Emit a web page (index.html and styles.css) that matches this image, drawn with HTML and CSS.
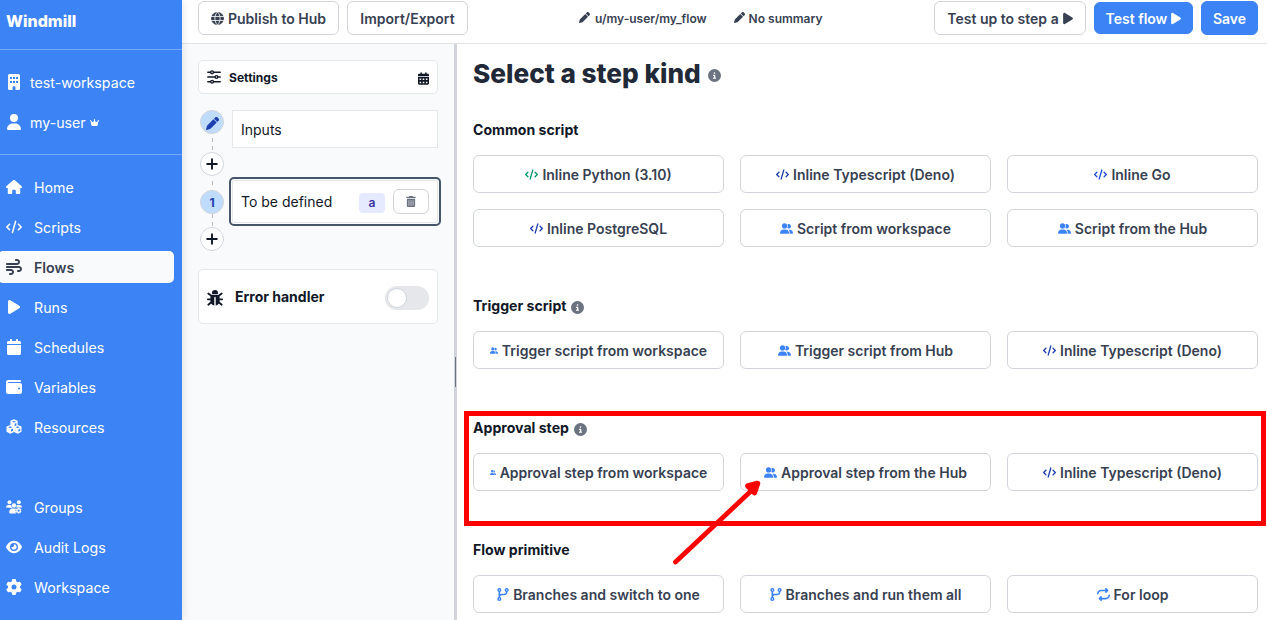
FILE: index.html
```
<!DOCTYPE html>
<html lang="en">
<head>
<meta charset="utf-8">
<title>Windmill</title>
<link rel="stylesheet" href="styles.css">
</head>
<body>
<svg class="sprite" aria-hidden="true">
  <symbol id="code" viewBox="0 0 640 512"><path d="M392.8 1.2c-17-4.9-34.7 5-39.6 22l-128 448c-4.9 17 5 34.7 22 39.6s34.7-5 39.6-22l128-448c4.9-17-5-34.7-22-39.6zm80.6 120.1c-12.5 12.5-12.5 32.8 0 45.3L562.7 256l-89.4 89.4c-12.5 12.5-12.5 32.8 0 45.3s32.8 12.5 45.3 0l112-112c12.5-12.5 12.5-32.8 0-45.3l-112-112c-12.5-12.5-32.8-12.5-45.3 0zm-306.7 0c-12.5-12.5-32.8-12.5-45.3 0l-112 112c-12.5 12.5-12.5 32.8 0 45.3l112 112c12.5 12.5 32.8 12.5 45.3 0s12.5-32.8 0-45.3L77.3 256l89.4-89.4c12.5-12.5 12.5-32.8 0-45.3z"/></symbol>
  <symbol id="play" viewBox="0 0 384 512"><path d="M73 39c-14.8-9.1-33.4-9.4-48.5-.9S0 62.6 0 80V432c0 17.4 9.4 33.4 24.5 41.9s33.7 8.1 48.5-.9L361 297c14.3-8.7 23-24.2 23-41s-8.7-32.2-23-41L73 39z"/></symbol>
  <symbol id="user" viewBox="0 0 448 512"><path d="M224 256A128 128 0 1 0 224 0a128 128 0 1 0 0 256zm-45.7 48C79.8 304 0 383.8 0 482.3C0 498.7 13.3 512 29.7 512H418.3c16.4 0 29.7-13.3 29.7-29.7C448 383.8 368.2 304 269.7 304H178.3z"/></symbol>
  <symbol id="building" viewBox="0 0 384 512"><path fill-rule="evenodd" d="M48 0H336a48 48 0 0 1 48 48V464a48 48 0 0 1-48 48H240V432a48 48 0 0 0-96 0v80H48a48 48 0 0 1-48-48V48A48 48 0 0 1 48 0zM64 96v64h64V96zm96 0v64h64V96zm96 0v64h64V96zM64 224v64h64V224zm96 0v64h64V224zm96 0v64h64V224z"/></symbol>
  <symbol id="house" viewBox="0 0 576 512"><path d="M575.8 255.5c0 18-15 32.1-32 32.1h-32l.7 160.2V472c0 22.1-17.9 40-40 40H392c-22.1 0-40-17.9-40-40V384c0-17.7-14.3-32-32-32H256c-17.7 0-32 14.3-32 32v88c0 22.1-17.9 40-40 40H104c-22.1 0-40-17.9-40-40V287.6H32c-18 0-32-14-32-32.1c0-9 3-17 10-24L266.4 8c7-7 15-8 22-8s15 2 21 7L564.8 231.5c8 7 12 15 11 24z"/></symbol>
  <symbol id="gear" viewBox="0 0 512 512"><path d="M495.9 166.6c3.2 8.7 .5 18.4-6.4 24.6l-43.3 39.4c1.1 8.3 1.7 16.8 1.7 25.4s-.6 17.1-1.7 25.4l43.3 39.4c6.9 6.2 9.6 15.9 6.4 24.6c-4.4 11.9-9.7 23.3-15.8 34.3l-4.7 8.1c-6.6 11-14 21.4-22.1 31.2c-5.9 7.2-15.7 9.6-24.5 6.8l-55.7-17.7c-13.4 10.3-28.2 18.9-44 25.4l-12.5 57.1c-2 9.1-9 16.3-18.2 17.8c-13.8 2.3-28 3.5-42.5 3.5s-28.7-1.2-42.5-3.5c-9.2-1.5-16.2-8.7-18.2-17.8l-12.5-57.1c-15.8-6.5-30.6-15.1-44-25.4L83.1 425.9c-8.8 2.8-18.6 .3-24.5-6.8c-8.1-9.8-15.5-20.2-22.1-31.2l-4.7-8.1c-6.1-11-11.4-22.4-15.8-34.3c-3.2-8.7-.5-18.4 6.4-24.6l43.3-39.4C64.6 273.1 64 264.6 64 256s.6-17.1 1.7-25.4L22.4 191.2c-6.9-6.2-9.6-15.9-6.4-24.6c4.4-11.9 9.7-23.3 15.8-34.3l4.7-8.1c6.6-11 14-21.4 22.1-31.2c5.9-7.2 15.7-9.6 24.5-6.8l55.7 17.7c13.4-10.3 28.2-18.9 44-25.4l12.5-57.1c2-9.1 9-16.3 18.2-17.8C227.3 1.2 241.5 0 256 0s28.7 1.2 42.5 3.5c9.2 1.5 16.2 8.7 18.2 17.8l12.5 57.1c15.8 6.5 30.6 15.1 44 25.4l55.7-17.7c8.8-2.8 18.6-.3 24.5 6.8c8.1 9.8 15.5 20.2 22.1 31.2l4.7 8.1c6.1 11 11.4 22.4 15.8 34.3zM256 336a80 80 0 1 0 0-160 80 80 0 1 0 0 160z"/></symbol>
  <symbol id="eye" viewBox="0 0 576 512"><path d="M288 32c-80.8 0-145.5 36.8-192.6 80.6C48.6 156 17.3 208 2.5 243.7c-3.3 7.9-3.3 16.7 0 24.6C17.3 304 48.6 356 95.4 399.4C142.5 443.2 207.2 480 288 480s145.5-36.8 192.6-80.6c46.8-43.5 78.1-95.4 93-131.1c3.3-7.9 3.3-16.7 0-24.6c-14.9-35.7-46.2-87.7-93-131.1C433.5 68.8 368.8 32 288 32zM144 256a144 144 0 1 1 288 0 144 144 0 1 1 -288 0zm144-64c0 35.3-28.7 64-64 64c-7.1 0-13.9-1.2-20.3-3.3c-5.5-1.8-11.9 1.6-11.7 7.4c.3 6.9 1.3 13.8 3.2 20.7c13.7 51.2 66.4 81.6 117.6 67.9s81.6-66.4 67.9-117.6c-11.1-41.5-47.8-69.4-88.6-71.1c-5.8-.2-9.2 6.1-7.4 11.7c2.1 6.4 3.3 13.2 3.3 20.3z"/></symbol>
  <symbol id="wind" viewBox="0 0 512 512"><path d="M288 32c0 17.7 14.3 32 32 32h32c17.7 0 32 14.3 32 32s-14.3 32-32 32H32c-17.7 0-32 14.3-32 32s14.3 32 32 32H352c53 0 96-43 96-96s-43-96-96-96H320c-17.7 0-32 14.3-32 32zm64 352c0 17.7 14.3 32 32 32h32c53 0 96-43 96-96s-43-96-96-96H32c-17.7 0-32 14.3-32 32s14.3 32 32 32H416c17.7 0 32 14.3 32 32s-14.3 32-32 32H384c-17.7 0-32 14.3-32 32zM128 512h32c53 0 96-43 96-96s-43-96-96-96H32c-17.7 0-32 14.3-32 32s14.3 32 32 32H160c17.7 0 32 14.3 32 32s-14.3 32-32 32H128c-17.7 0-32 14.3-32 32s14.3 32 32 32z"/></symbol>
  <symbol id="info" viewBox="0 0 512 512"><path d="M256 512A256 256 0 1 0 256 0a256 256 0 1 0 0 512zM216 336h24V272H216c-13.3 0-24-10.7-24-24s10.7-24 24-24h48c13.3 0 24 10.7 24 24v88h8c13.3 0 24 10.7 24 24s-10.7 24-24 24H216c-13.3 0-24-10.7-24-24s10.7-24 24-24zm40-208a32 32 0 1 1 0 64 32 32 0 1 1 0-64z"/></symbol>
  <symbol id="crown" viewBox="0 0 576 512"><path d="M309 106c11.4-7 19-19.7 19-34c0-22.1-17.9-40-40-40s-40 17.9-40 40c0 14.4 7.6 27 19 34L209.7 220.6c-9.1 18.2-32.7 23.4-48.6 10.7L72 160c5-6.7 8-15 8-24c0-22.1-17.9-40-40-40S0 113.9 0 136s17.9 40 40 40c.2 0 .5 0 .7 0L86.4 427.4c5.5 30.4 32 52.6 63 52.6H426.6c30.9 0 57.4-22.1 63-52.6L535.3 176c.2 0 .5 0 .7 0c22.1 0 40-17.9 40-40s-17.9-40-40-40s-40 17.9-40 40c0 9 3 17.3 8 24l-89.1 71.3c-15.9 12.7-39.5 7.5-48.6-10.7L309 106z"/></symbol>
  <symbol id="people" viewBox="0 0 640 512"><path d="M96 128a128 128 0 1 1 256 0A128 128 0 1 1 96 128zM0 482.3C0 383.8 79.8 304 178.3 304h91.4C368.2 304 448 383.8 448 482.3c0 16.4-13.3 29.7-29.7 29.7H29.7C13.3 512 0 498.7 0 482.3zM609.3 512H471.4c5.4-9.4 8.6-20.3 8.6-32v-8c0-60.7-27.1-115.2-69.8-151.8c2.4-.1 4.7-.2 7.1-.2h61.4C567.8 320 640 392.2 640 481.3c0 17-13.8 30.7-30.7 30.7zM432 256c-31 0-59-12.6-79.3-32.9C372.4 196.5 384 163.6 384 128c0-26.8-6.6-52.1-18.3-74.3C384.3 40.1 407.2 32 432 32c61.9 0 112 50.1 112 112s-50.1 112-112 112z"/></symbol>
  <symbol id="pen" viewBox="0 0 512 512"><path d="M362.7 19.3L314.3 67.7 444.3 197.7l48.4-48.4c25-25 25-65.5 0-90.5L453.3 19.3c-25-25-65.5-25-90.5 0zm-71 71L58.6 323.5c-10.4 10.4-18 23.3-22.2 37.4L1 481.2C-1.5 489.7 .8 498.8 7 505s15.3 8.5 23.7 6.1l120.3-35.4c14.1-4.2 27-11.8 37.4-22.2L421.7 220.3 291.7 90.3z"/></symbol>
  <symbol id="calendar" viewBox="0 0 448 512"><path d="M96 32V64H48C21.5 64 0 85.5 0 112v48H448V112c0-26.5-21.5-48-48-48H352V32c0-17.7-14.3-32-32-32s-32 14.3-32 32V64H160V32c0-17.7-14.3-32-32-32S96 14.3 96 32zM448 192H0V464c0 26.5 21.5 48 48 48H400c26.5 0 48-21.5 48-48V192z"/></symbol>
  <symbol id="calendar-days" viewBox="0 0 448 512"><path fill-rule="evenodd" d="M96 32V64H48C21.5 64 0 85.5 0 112v48H448V112c0-26.5-21.5-48-48-48H352V32c0-17.7-14.3-32-32-32s-32 14.3-32 32V64H160V32c0-17.7-14.3-32-32-32S96 14.3 96 32zM448 192H0V464c0 26.5 21.5 48 48 48H400c26.5 0 48-21.5 48-48V192zM64 256h64v64H64zM192 256h64v64h-64zM320 256h64v64h-64zM64 384h64v64H64zM192 384h64v64h-64zM320 384h64v64h-64z"/></symbol>
  <symbol id="wallet" viewBox="0 0 512 512"><path d="M64 32C28.7 32 0 60.7 0 96V416c0 35.3 28.7 64 64 64H448c35.3 0 64-28.7 64-64V192c0-35.3-28.7-64-64-64H80c-8.8 0-16-7.2-16-16s7.2-16 16-16H448c17.7 0 32-14.3 32-32s-14.3-32-32-32H64zM416 272a32 32 0 1 1 0 64 32 32 0 1 1 0-64z"/></symbol>
  <symbol id="branch" viewBox="0 0 448 512"><path d="M80 104a24 24 0 1 0 0-48 24 24 0 1 0 0 48zm80-24c0 32.8-19.7 61-48 73.3v87.8c18.8-10.9 40.7-17.1 64-17.1h96c35.3 0 64-28.7 64-64v-6.7C307.7 141 288 112.8 288 80c0-44.2 35.8-80 80-80s80 35.8 80 80c0 32.8-19.7 61-48 73.3V160c0 70.7-57.3 128-128 128H176c-35.3 0-64 28.7-64 64v6.7c28.3 12.3 48 40.5 48 73.3c0 44.2-35.8 80-80 80s-80-35.8-80-80c0-32.8 19.7-61 48-73.3V352 153.3C19.7 141 0 112.8 0 80C0 35.8 35.8 0 80 0s80 35.8 80 80zm232 0a24 24 0 1 0 -48 0 24 24 0 1 0 48 0zM80 456a24 24 0 1 0 0-48 24 24 0 1 0 0 48z"/></symbol>
  <symbol id="repeat" viewBox="0 0 512 512"><path d="M0 224c0 17.7 14.3 32 32 32s32-14.3 32-32c0-53 43-96 96-96H320v32c0 12.9 7.8 24.6 19.8 29.6s25.7 2.2 34.9-6.9l64-64c12.5-12.5 12.5-32.8 0-45.3l-64-64c-9.2-9.2-22.9-11.9-34.9-6.9S320 19.1 320 32V64H160C71.6 64 0 135.6 0 224zm512 64c0-17.7-14.3-32-32-32s-32 14.3-32 32c0 53-43 96-96 96H192V352c0-12.9-7.8-24.6-19.8-29.6s-25.7-2.2-34.9 6.9l-64 64c-12.5 12.5-12.5 32.8 0 45.3l64 64c9.2 9.2 22.9 11.9 34.9 6.9s19.8-16.6 19.8-29.6V448H352c88.4 0 160-71.6 160-160z"/></symbol>
  <symbol id="plus" viewBox="0 0 12 12"><path d="M6 1.2v9.6M1.2 6h9.6" fill="none" stroke="currentColor" stroke-width="1.9" stroke-linecap="round"/></symbol>
  <symbol id="cubes" viewBox="0 0 16 16"><path fill-rule="evenodd" d="M8 .3l3.6 1.4v4.2l3.9 1.6v5.3l-3.8 1.9L8 13.1l-3.7 1.6-3.8-1.9V7.5l3.9-1.6V1.7zM8 1.9L5.9 2.7 8 3.5l2.1-.8zM8.6 4.8v2.4l1.8-.8V4zM4.3 7.3l-2.2.9 2.2.9 2.2-.9zM11.7 7.3l-2.2.9 2.2.9 2.2-.9zM5 10.4v2.4l2-1V9.6zM12.4 10.4v2.4l1.9-1V9.6z"/></symbol>
  <symbol id="users-gear" viewBox="0 0 16 14"><circle cx="3.5" cy="2.2" r="2"/><circle cx="12.8" cy="2.2" r="2"/><circle cx="8" cy="5.4" r="2.2"/><path d="M0 7.6C0 6 1 5 2.5 5h1.8c.4 0 .7.1 1 .2-.1 1 .3 2 1 2.8zM10.6 5.2c.3-.1.7-.2 1-.2h1.8C15 5 16 6 16 7.6H9.8c.6-.6.9-1.5.8-2.4zM3.2 12.6c0-2.4 1.4-4 3.4-4h2.2c.5 0 .9.1 1.2.3l-.7 1.4.8 1-.6 1.4.8.8H4c-.5 0-.8-.4-.8-.9z"/><path fill-rule="evenodd" d="M11.9 7.7h1.5l.3 1 1-.2.7 1.3-.7.8.7.9-.7 1.3-1-.2-.3 1h-1.5l-.3-1-1 .2-.7-1.3.7-.9-.7-.8.7-1.3 1 .2zM12.65 9.6a1.05 1.05 0 1 0 0 2.1 1.05 1.05 0 0 0 0-2.1z"/></symbol>
  <symbol id="globe" viewBox="0 0 16 16"><circle cx="8" cy="8" r="8"/><path d="M0 5.5h16M0 10.5h16M8 0C3.7 4 3.7 12 8 16c4.3-4 4.3-12 0-16" fill="none" stroke="#fff" stroke-width="1"/></symbol>
  <symbol id="sliders" viewBox="0 0 16 16"><g fill="none" stroke="currentColor" stroke-width="1.9" stroke-linecap="round"><path d="M1 2.6h2.7M8 2.6h7M1 8h7.6M13 8h2M1 13.4h2.7M8 13.4h7"/><circle cx="5.8" cy="2.6" r="1.6" stroke-width="1.6"/><circle cx="10.8" cy="8" r="1.6" stroke-width="1.6"/><circle cx="5.8" cy="13.4" r="1.6" stroke-width="1.6"/></g></symbol>
  <symbol id="trash" viewBox="0 0 14 16"><path fill-rule="evenodd" d="M4.2.5 4.7 0h4.6l.5.5.2.5h3a1 1 0 0 1 0 2H1a1 1 0 0 1 0-2h3zM1 4h12v10.5A1.5 1.5 0 0 1 11.5 16h-9A1.5 1.5 0 0 1 1 14.5zM3.6 6v8h.8V6zM6.6 6v8h.8V6zM9.6 6v8h.8V6z"/></symbol>
  <symbol id="bug" viewBox="0 0 16 16"><path d="M5 3a3 3 0 0 1 6 0v.3a.6.6 0 0 1-.6.6H5.6A.6.6 0 0 1 5 3.3z"/><path d="M5 4.8h6c1 .5 1.6 1.5 1.6 2.7V11c0 2.5-1.7 4.3-3.9 4.6V7.5a.7.7 0 0 0-1.4 0v8.1C5.1 15.3 3.4 13.5 3.4 11V7.5c0-1.2.6-2.2 1.6-2.7z"/><path d="M1.3 3.5l3 2.3M14.7 3.5l-3 2.3M.9 9.3h3M15.1 9.3h-3M1.3 14.7l3-2.5M14.7 14.7l-3-2.5" fill="none" stroke="currentColor" stroke-width="1.8" stroke-linecap="round"/></symbol>
</svg>

<div class="app">
  <aside class="sidebar">
    <div class="brand">Windmill</div>
    <div class="account">
      <a class="nav-item"><svg class="nav-icon"><use href="#building"/></svg>test-workspace</a>
      <a class="nav-item"><svg class="nav-icon"><use href="#user"/></svg>my-user<svg class="crown"><use href="#crown"/></svg></a>
    </div>
    <nav class="menu">
      <a class="nav-item"><svg class="nav-icon"><use href="#house"/></svg>Home</a>
      <a class="nav-item"><svg class="nav-icon"><use href="#code"/></svg>Scripts</a>
      <a class="nav-item active"><svg class="nav-icon"><use href="#wind"/></svg>Flows</a>
      <a class="nav-item"><svg class="nav-icon"><use href="#play"/></svg>Runs</a>
      <a class="nav-item"><svg class="nav-icon"><use href="#calendar"/></svg>Schedules</a>
      <a class="nav-item"><svg class="nav-icon"><use href="#wallet"/></svg>Variables</a>
      <a class="nav-item"><svg class="nav-icon"><use href="#cubes"/></svg>Resources</a>
    </nav>
    <nav class="menu admin">
      <a class="nav-item"><svg class="nav-icon"><use href="#users-gear"/></svg>Groups</a>
      <a class="nav-item"><svg class="nav-icon"><use href="#eye"/></svg>Audit Logs</a>
      <a class="nav-item"><svg class="nav-icon"><use href="#gear"/></svg>Workspace</a>
    </nav>
  </aside>

  <div class="main">
    <header class="topbar">
      <button class="btn publish"><svg class="icon"><use href="#globe"/></svg>Publish to Hub</button>
      <button class="btn import">Import/Export</button>
      <div class="meta">
        <span class="meta-item"><svg class="meta-pen"><use href="#pen"/></svg>u/my-user/my_flow</span>
        <span class="meta-item"><svg class="meta-pen"><use href="#pen"/></svg>No summary</span>
      </div>
      <button class="btn test-step">Test up to step a<svg class="icon-play"><use href="#play"/></svg></button>
      <button class="btn primary test-flow">Test flow<svg class="icon-play"><use href="#play"/></svg></button>
      <button class="btn primary save">Save</button>
    </header>

    <div class="panes">
      <section class="flow">
        <div class="card settings"><svg class="settings-icon"><use href="#sliders"/></svg><b>Settings</b><svg class="cal-icon"><use href="#calendar-days"/></svg></div>
        <div class="graph">
          <div class="rail">
            <span class="node filled"><svg class="node-pen"><use href="#pen"/></svg></span>
            <span class="link long"></span>
            <span class="node"><svg class="node-plus"><use href="#plus"/></svg></span>
            <span class="link mid"></span>
            <span class="node filled">1</span>
            <span class="link short"></span>
            <span class="node"><svg class="node-plus"><use href="#plus"/></svg></span>
          </div>
          <div class="steps">
            <div class="step">Inputs</div>
            <div class="step selected">To be defined<span class="tag">a</span><button class="trash"><svg class="trash-icon"><use href="#trash"/></svg></button></div>
          </div>
        </div>
        <div class="card error"><svg class="bug-icon"><use href="#bug"/></svg><b>Error handler</b><span class="toggle"><span class="knob"></span></span></div>
      </section>
      <div class="splitter"><span class="grip"></span></div>

      <section class="picker">
        <h1>Select a step kind<svg class="info"><use href="#info"/></svg></h1>
        <h2>Common script</h2>
        <div class="grid">
          <button class="btn kind"><svg class="icon green"><use href="#code"/></svg>Inline Python (3.10)</button>
          <button class="btn kind"><svg class="icon navy"><use href="#code"/></svg>Inline Typescript (Deno)</button>
          <button class="btn kind"><svg class="icon royal"><use href="#code"/></svg>Inline Go</button>
          <button class="btn kind"><svg class="icon navy"><use href="#code"/></svg>Inline PostgreSQL</button>
          <button class="btn kind"><svg class="icon blue"><use href="#people"/></svg>Script from workspace</button>
          <button class="btn kind"><svg class="icon blue"><use href="#people"/></svg>Script from the Hub</button>
        </div>
        <h2>Trigger script<svg class="info"><use href="#info"/></svg></h2>
        <div class="grid">
          <button class="btn kind"><svg class="icon blue small"><use href="#people"/></svg>Trigger script from workspace</button>
          <button class="btn kind"><svg class="icon blue"><use href="#people"/></svg>Trigger script from Hub</button>
          <button class="btn kind"><svg class="icon navy"><use href="#code"/></svg>Inline Typescript (Deno)</button>
        </div>
        <h2>Approval step<svg class="info"><use href="#info"/></svg></h2>
        <div class="grid">
          <button class="btn kind"><svg class="icon blue tiny"><use href="#people"/></svg>Approval step from workspace</button>
          <button class="btn kind"><svg class="icon blue"><use href="#people"/></svg>Approval step from the Hub</button>
          <button class="btn kind"><svg class="icon navy"><use href="#code"/></svg>Inline Typescript (Deno)</button>
        </div>
        <h2>Flow primitive</h2>
        <div class="grid">
          <button class="btn kind"><svg class="icon blue branch"><use href="#branch"/></svg>Branches and switch to one</button>
          <button class="btn kind"><svg class="icon blue branch"><use href="#branch"/></svg>Branches and run them all</button>
          <button class="btn kind"><svg class="icon blue"><use href="#repeat"/></svg>For loop</button>
        </div>
      </section>
    </div>
  </div>
</div>

<div class="highlight"></div>
<svg class="arrow" viewBox="0 0 100 90"><path d="M6.5 82L82 11" stroke="#f00" stroke-width="4.8" stroke-linecap="round"/><path d="M88.500 3.500L79 6L85.500 12.500Z" fill="#f00" stroke="#f00" stroke-width="5.500" stroke-linejoin="round"/></svg>
</body>
</html>
```
FILE: styles.css
```
* { box-sizing: border-box; }
body { margin: 0; font-family: Inter, sans-serif; font-size: 14px; color: #111827; background: #fff; overflow: hidden; }
svg { display: block; flex: none; fill: currentColor; }
.sprite { position: absolute; width: 0; height: 0; }
.app { display: flex; width: 1267px; height: 620px; }

.sidebar { width: 182px; flex: none; background: #3c83f6; color: #fff; display: flex; flex-direction: column; z-index: 1; box-shadow: 0 0 9px rgba(0, 0, 0, .12); font-size: 14.2px; }
.brand { height: 50px; padding: 9px 6px 0; font-size: 16px; line-height: 24px; font-weight: 800; border-bottom: 1px solid #76a8f9; }
.account { height: 105px; padding-top: 16px; display: flex; flex-direction: column; gap: 8px; border-bottom: 1px solid #76a8f9; }
.menu { display: flex; flex-direction: column; gap: 8px; padding-top: 16px; }
.admin { padding-top: 48px; }
.nav-item { display: flex; align-items: center; height: 32px; padding-left: 6px; margin-right: 8px; white-space: nowrap; }
.account .nav-item { gap: 8px; }
.menu .nav-item { gap: 12px; }
.nav-icon { width: 16px; height: 16px; margin-top: -1px; }
.account .nav-item .crown { width: 9px; height: 9px; margin: 1px 0 0 -4px; }
.active { margin-left: -2px; padding-left: 8px; background: #f9fafb; color: #374151; font-weight: 600; border-radius: 5px; }

.main { flex: 1; min-width: 0; display: flex; flex-direction: column; }
.topbar { height: 44px; flex: none; display: flex; align-items: center; padding: 0 9px 7px 16px; border-bottom: 1px solid #e0e2e6; }
.btn { display: flex; align-items: center; justify-content: center; gap: 4px; height: 34px; padding: 0; font: 600 14px Inter, sans-serif; color: #374151; background: #fff; border: 1px solid #d1d5db; border-radius: 6px; white-space: nowrap; flex: none; }
.primary { background: #3c83f6; border-color: #3c83f6; color: #fff; }
.publish { width: 141px; margin-right: 8px; }
.import { width: 121px; }
.meta { flex: 1; display: flex; gap: 27px; padding-left: 111px; font-size: 12px; font-weight: 600; color: #374151; }
.meta-item { display: flex; align-items: center; gap: 5px; }
.meta-item + .meta-item { gap: 4px; }
.meta-pen { width: 11px; height: 11px; margin-top: -1px; }
.test-step { width: 152px; margin-right: 8px; }
.test-flow { width: 99px; height: 32px; margin-right: 8px; }
.save { width: 57px; }
.icon-play { width: 10px; height: 13px; }

.panes { flex: 1; min-height: 0; display: flex; }
.flow { width: 272px; flex: none; background: #f9fafb; padding: 16px; }
.card { display: flex; align-items: center; width: 240px; background: #fff; border: 1px solid #e5e7eb; border-radius: 5px; }
.settings { height: 34px; padding: 0 8px; font-size: 12.1px; gap: 8px; }
.settings-icon { width: 14px; height: 14px; }
.cal-icon { width: 11px; height: 13px; margin: 2px 0 0 auto; }
.graph { display: flex; gap: 7px; margin-top: 16px; height: 143px; }
.rail { width: 24px; margin-left: 2px; display: flex; flex-direction: column; align-items: center; }
.node { width: 24px; height: 24px; flex: none; display: flex; align-items: center; justify-content: center; border: 1px solid #d1d5db; border-radius: 50%; background: #fff; font-size: 12px; font-weight: 700; }
.filled { background: #bfdbfe; color: #1e40af; }
.node-pen { width: 13px; height: 13px; margin-top: 2px; }
.node-plus { width: 12px; height: 12px; margin-right: 1px; }
.link { width: 1px; background: repeating-linear-gradient(#bbb 0 4px, transparent 4px 8px); margin-left: 1px; }
.long { height: 14px; margin-top: 4px; }
.mid { height: 8px; margin: 3px 0; background: linear-gradient(transparent 0 2px, #bbb 2px 6px, transparent 6px); }
.short { height: 13px; }
.steps { display: flex; flex-direction: column; gap: 32px; }
.step { display: flex; align-items: center; width: 206px; height: 38px; margin-left: 1px; padding: 0 8px; background: #fff; border: 1px solid #e5e7eb; }
.selected { height: 43px; outline: 2px solid #475569; outline-offset: 1px; border-radius: 2px; }
.tag { margin-left: auto; margin-top: 2px; width: 26px; height: 20px; border-radius: 4px; background: #e5eaff; color: #3730a3; font-size: 12.1px; font-weight: 600; line-height: 19px; text-align: center; }
.trash { margin-left: 8px; width: 36px; height: 25px; padding: 0; background: #fff; border: 1px solid #d1d5db; border-radius: 6px; display: flex; align-items: center; justify-content: center; color: #6b7280; }
.trash-icon { width: 10px; height: 11px; }
.error { height: 55px; margin-top: 16px; padding: 0 8px; gap: 12px; }
.error b, .settings b { font-weight: 700; }
.bug-icon { width: 16px; height: 16px; margin-top: 3px; }
.toggle { width: 44px; height: 24px; margin: 3px 0 0 auto; padding: 2px; border-radius: 12px; background: #e5e7eb; }
.knob { display: block; width: 20px; height: 20px; border-radius: 50%; background: #fff; border: 1px solid #d1d5db; }
.splitter { width: 3px; flex: none; background: #d1d5db; display: flex; align-items: center; padding: 80px 0 0 1px; }
.grip { width: 1px; height: 30px; background: #6b7280; }

.picker { flex: 1; min-width: 0; padding: 14px 9px 0 16px; overflow: hidden; }
h1, h2 { margin: 0; display: flex; align-items: center; }
h1 { height: 30px; font-size: 26.2px; font-weight: 800; color: #1f2937; gap: 7px; margin-bottom: 31px; }
h2 { height: 20px; font-size: 14.1px; font-weight: 700; gap: 5px; margin-bottom: 16px; }
.info { width: 13px; height: 13px; color: #6b7280; margin-top: 4px; }
.grid { display: grid; grid-template-columns: repeat(3, 251px); gap: 16px; margin-bottom: 48px; }
.kind { height: 38px; }
.icon { width: 13px; height: 13px; }
.kind .small { width: 8px; }
.kind .tiny { width: 6px; }
.kind .branch { width: 12px; }
.green { color: #059669; }
.navy { color: #1e40af; }
.royal { color: #1d4ed8; }
.blue { color: #3c83f6; }

.highlight { position: absolute; left: 464px; top: 411px; width: 802px; height: 115px; border: 5px solid #f00; }
.arrow { position: absolute; left: 669px; top: 480px; width: 100px; height: 90px; }
```
